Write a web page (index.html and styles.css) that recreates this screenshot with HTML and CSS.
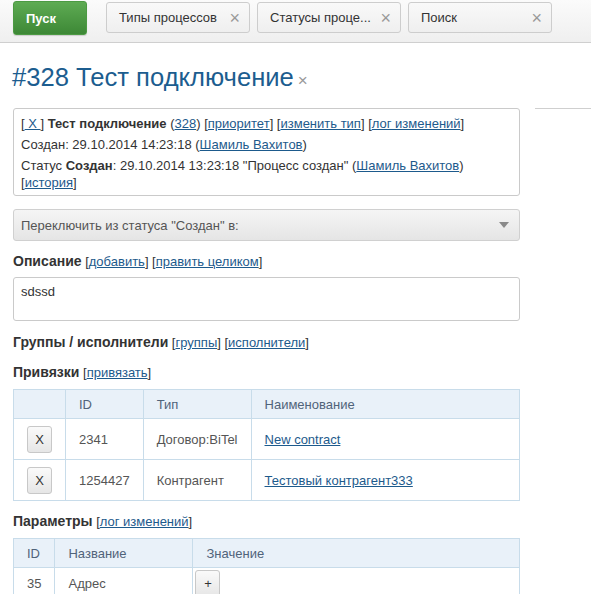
FILE: index.html
```html
<!DOCTYPE html>
<html lang="ru">
<head>
<meta charset="utf-8">
<link rel="stylesheet" href="styles.css">
</head>
<body>
<div class="topbar">
  <button class="start">Пуск</button>
  <div class="tabs">
    <div class="tab"><span class="tab-label">Типы процессов</span><span class="tab-x">×</span></div>
    <div class="tab"><span class="tab-label">Статусы проце...</span><span class="tab-x">×</span></div>
    <div class="tab"><span class="tab-label">Поиск</span><span class="tab-x">×</span></div>
  </div>
</div>

<h1 class="title">#328 Тест подключение<span class="title-x">×</span></h1>

<div class="layout">
  <div class="main">
    <div class="info">
      <p>[<a href="#">&nbsp;X&nbsp;</a>] <b>Тест подключение</b> (<a href="#">328</a>) [<a href="#">приоритет</a>] [<a href="#">изменить тип</a>] [<a href="#">лог изменений</a>]</p>
      <p>Создан: 29.10.2014 14:23:18 (<a href="#">Шамиль Вахитов</a>)</p>
      <p>Статус <b>Создан</b>: 29.10.2014 13:23:18 "Процесс создан" (<a href="#">Шамиль Вахитов</a>) [<a href="#">история</a>]</p>
    </div>

    <div class="select">
      <span>Переключить из статуса "Создан" в:</span>
      <span class="arrow"></span>
    </div>

    <div class="heading"><b>Описание</b> [<a href="#">добавить</a>] [<a href="#">править целиком</a>]</div>
    <div class="desc">sdssd</div>

    <div class="heading h-groups"><b>Группы / исполнители</b> [<a href="#">группы</a>] [<a href="#">исполнители</a>]</div>

    <div class="heading h-links"><b>Привязки</b> [<a href="#">привязать</a>]</div>
    <table class="grid links">
      <colgroup><col class="c1"><col class="c2"><col class="c3"><col></colgroup>
      <thead>
        <tr><th></th><th>ID</th><th>Тип</th><th>Наименование</th></tr>
      </thead>
      <tbody>
        <tr><td class="btn-cell"><button class="small-btn">X</button></td><td>2341</td><td>Договор:BiTel</td><td><a href="#">New contract</a></td></tr>
        <tr><td class="btn-cell"><button class="small-btn">X</button></td><td>1254427</td><td>Контрагент</td><td><a href="#">Тестовый контрагент333</a></td></tr>
      </tbody>
    </table>

    <div class="heading h-params"><b>Параметры</b> [<a href="#">лог изменений</a>]</div>
    <table class="grid params">
      <colgroup><col class="p1"><col class="p2"><col></colgroup>
      <thead>
        <tr><th>ID</th><th>Название</th><th>Значение</th></tr>
      </thead>
      <tbody>
        <tr><td>35</td><td>Адрес</td><td class="btn-cell2"><button class="small-btn">+</button></td></tr>
      </tbody>
    </table>
  </div>
  <div class="side"></div>
</div>
</body>
</html>
```
FILE: styles.css
```css
html, body {
  margin: 0;
  padding: 0;
  background: #fff;
}
body {
  font-family: "Liberation Sans", Arial, sans-serif;
  font-size: 13px;
  color: #333;
  overflow: hidden;
}
a {
  color: #1d5a8c;
  text-decoration: underline;
}

.topbar {
  height: 42px;
  border-bottom: 1px solid #cfcfcf;
  background: linear-gradient(#fbfbfb, #efefef);
  display: flex;
  align-items: flex-start;
  padding-left: 13px;
  box-sizing: content-box;
}
.start {
  margin-top: 1px;
  width: 74px;
  height: 34px;
  border: 1px solid #4c9a43;
  border-radius: 3px;
  background: linear-gradient(#5eab53, #3d8836);
  color: #fff;
  font-family: "Liberation Sans", Arial, sans-serif;
  font-weight: bold;
  font-size: 13px;
  text-align: left;
  padding: 0 0 0 12px;
  box-shadow: 0 1px 1px rgba(0,0,0,0.15);
}
.tabs {
  display: flex;
  gap: 7px;
  margin-left: 19px;
}
.tab {
  margin-top: 2px;
  width: 144px;
  height: 31px;
  box-sizing: border-box;
  border: 1px solid #cdcdcd;
  border-radius: 3px;
  background: linear-gradient(#f9f9f9, #efefef);
  display: flex;
  align-items: center;
  justify-content: space-between;
  padding: 0 9px 0 12px;
  color: #333;
}
.tab-x {
  color: #999;
  font-size: 18px;
  line-height: 1;
}

.title {
  margin: 19px 0 0 12px;
  height: 46px;
  font-weight: normal;
  font-size: 25.6px;
  line-height: 30px;
  color: #1c5d8f;
}
.title-x {
  color: #999;
  font-size: 17px;
  margin-left: 4px;
}

.layout {
  display: flex;
  align-items: flex-start;
}
.main {
  width: 507px;
  margin-left: 13px;
  flex: none;
}
.side {
  flex: 1;
  margin-left: 15px;
  border-top: 1px solid #cfcfcf;
}

.info {
  border: 1px solid #cacaca;
  border-radius: 3px;
  padding: 4px 7px 4px 7px;
  height: 78px;
}
.info p {
  margin: 4px 0 0 0;
  line-height: 17px;
}
.info p:first-child {
  margin-top: 2px;
}

.select {
  margin-top: 13px;
  height: 32px;
  box-sizing: border-box;
  border: 1px solid #d0d0d0;
  border-radius: 3px;
  background: linear-gradient(#f5f5f5, #e5e5e5);
  display: flex;
  align-items: center;
  justify-content: space-between;
  padding: 0 10px 0 7px;
  color: #555;
}
.arrow {
  width: 0;
  height: 0;
  border-left: 5px solid transparent;
  border-right: 5px solid transparent;
  border-top: 6px solid #8a8a8a;
}

.heading {
  line-height: 16px;
  height: 16px;
  margin-top: 13px;
}
.heading b {
  color: #333;
  font-size: 14px;
  line-height: 14px;
}
.desc {
  margin-top: 7px;
  height: 44px;
  box-sizing: border-box;
  border: 1px solid #cacaca;
  border-radius: 3px;
  padding: 5px 7px;
  line-height: 17px;
}
.h-groups { margin-top: 14px; }
.h-links { margin-top: 14px; }
.h-params { margin-top: 13px; }

.grid {
  width: 507px;
  border-collapse: collapse;
  margin-top: 8px;
  color: #555;
}
.grid th, .grid td {
  border: 1px solid #c8dcea;
  text-align: left;
  padding: 0 13px;
}
.grid th {
  background: #e9f1f9;
  height: 28px;
  font-weight: normal;
  color: #50637a;
}
.grid td {
  height: 40px;
}
.links .c1 { width: 52px; }
.links .c2 { width: 77px; }
.links .c3 { width: 107px; }
.params .p1 { width: 41px; }
.params .p2 { width: 138px; }
.btn-cell { padding: 0 0 0 13px !important; }
.btn-cell2 { padding: 0 0 0 2px !important; vertical-align: top; }
.small-btn {
  width: 25px;
  height: 27px;
  border: 1px solid #c8c8c8;
  border-radius: 3px;
  background: linear-gradient(#fafafa, #e6e6e6);
  font-family: "Liberation Sans", Arial, sans-serif;
  font-size: 13px;
  color: #333;
  padding: 0;
}
.params td { height: 30px; vertical-align: top; padding-top: 8px; }
.params td.btn-cell2 { padding-top: 0 !important; }
.btn-cell2 .small-btn { margin-top: 2px; }
```
